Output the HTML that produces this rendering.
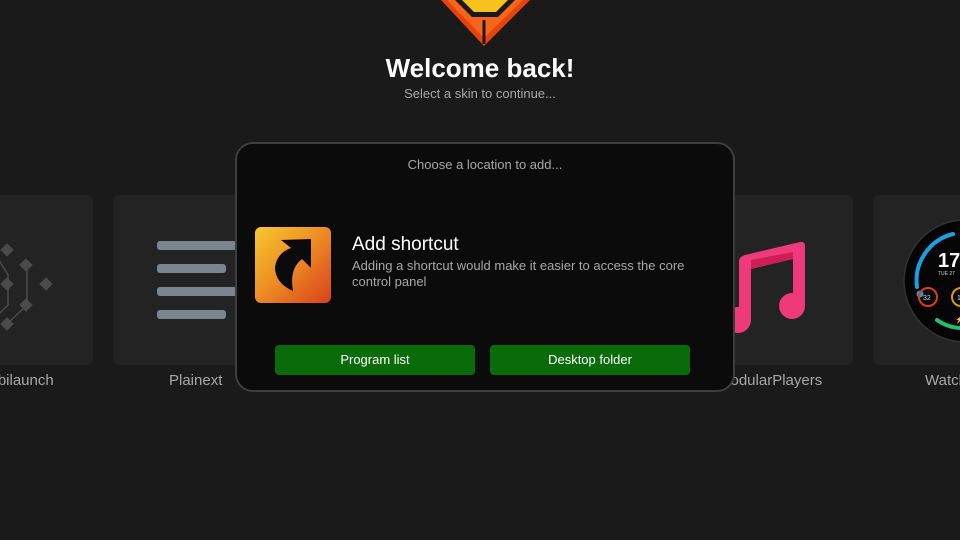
<!DOCTYPE html>
<html><head><meta charset="utf-8"><style>
*{margin:0;padding:0;box-sizing:border-box}
html,body{width:960px;height:540px;overflow:hidden}
body{background:#1a1a1a;font-family:"Liberation Sans",sans-serif;position:relative}
.card{position:absolute;top:195px;width:180px;height:170px;background:#232323;border-radius:6px;overflow:hidden}
.lbl{position:absolute;top:372px;font-size:15px;color:#a8a8a8;white-space:nowrap}
.modal{position:absolute;left:235px;top:142px;width:500px;height:250px;background:#0b0b0b;border:2px solid #3e3e3e;border-radius:18px}
.btn{position:absolute;top:201px;width:200px;height:30px;background:#0a6b0a;border-radius:4px;color:#fff;font-size:13px;text-align:center;line-height:30px}
</style></head><body>
<svg style="position:absolute;left:0;top:0" width="960" height="60">
<polygon points="441,0 530,0 484,46" fill="#e8420f"/>
<polygon points="447,0 523,0 484,38" fill="#f5661a"/>
<polygon points="455,0 515,0 498,17 472,17" fill="#1a1a1a"/>
<polygon points="462,0 508,0 496,12 474,12" fill="#f7c21d"/>
<line x1="484" y1="20" x2="484" y2="44" stroke="#1a1a1a" stroke-width="3"/>
</svg>
<div style="position:absolute;left:0;width:960px;top:53px;text-align:center;color:#fff;font-size:26px;font-weight:bold">Welcome back!</div>
<div style="position:absolute;left:0;width:960px;top:86px;text-align:center;color:#a8a8a8;font-size:13px">Select a skin to continue...</div>

<div class="card" style="left:-87px">
<svg width="180" height="170" style="position:absolute;left:0;top:0"><g fill="#4a4a4a" stroke="#4a4a4a" stroke-width="1.5">
<polyline points="80,55 95,80 95,110 80,125" fill="none"/>
<rect x="90" y="51" width="8" height="8" transform="rotate(45 94 55)"/>
<rect x="109" y="66" width="8" height="8" transform="rotate(45 113 70)"/>
<rect x="90" y="85" width="8" height="8" transform="rotate(45 94 89)"/>
<rect x="129" y="85" width="8" height="8" transform="rotate(45 133 89)"/>
<rect x="109" y="106" width="8" height="8" transform="rotate(45 113 110)"/>
<rect x="90" y="125" width="8" height="8" transform="rotate(45 94 129)"/>
<line x1="114" y1="70" x2="114" y2="110"/><line x1="114" y1="110" x2="94" y2="129"/>
</g></svg></div>
<div class="lbl" style="left:-23px">Mobilaunch</div>
<div class="card" style="left:113px">
<div style="position:absolute;left:44px;top:46px;width:80px;height:9px;background:#7b8590;border-radius:3px"></div>
<div style="position:absolute;left:44px;top:69px;width:69px;height:9px;background:#7b8590;border-radius:3px"></div>
<div style="position:absolute;left:44px;top:92px;width:80px;height:9px;background:#7b8590;border-radius:3px"></div>
<div style="position:absolute;left:44px;top:115px;width:69px;height:9px;background:#7b8590;border-radius:3px"></div>
</div>
<div class="lbl" style="left:169px">Plainext</div>
<div class="card" style="left:673px">
<svg width="180" height="170" style="position:absolute;left:0;top:0">
<path d="M72,60 L127,47 Q132,46 132,51 L132,110 A13,13 0 1 1 120,98 L120,64 L78,74 L78,125 A13,13 0 1 1 66,112 L66,66 Q66,62 72,60Z" fill="#ee3a7a"/>
<path d="M78,65 L120,57 L120,64 L78,74Z" fill="#cc1f55"/>
</svg></div>
<div class="lbl" style="left:718px">ModularPlayers</div>
<div class="card" style="left:873px">
<svg width="180" height="170" style="position:absolute;left:0;top:0">
<circle cx="92" cy="86" r="61" fill="#050505" stroke="#333" stroke-width="1.5"/>
<path d="M44,92 A48,48 0 0 1 80,39" fill="none" stroke="#1aa0e0" stroke-width="4" stroke-linecap="round"/>
<circle cx="47" cy="99" r="3.5" fill="#1aa0e0"/>
<path d="M64,125 A45,45 0 0 0 100,132" fill="none" stroke="#1fbf70" stroke-width="4" stroke-linecap="round"/>
<circle cx="55" cy="102" r="9" fill="none" stroke="#d8400e" stroke-width="2"/>
<circle cx="88" cy="102" r="9" fill="none" stroke="#d89a0e" stroke-width="2"/>
<text x="65" y="72" fill="#fff" font-size="20" font-weight="bold" font-family="Liberation Sans">17:</text>
<text x="65" y="80" fill="#ccc" font-size="5" font-family="Liberation Sans">TUE 27</text>
<text x="50" y="105" fill="#ddd" font-size="7" font-family="Liberation Sans">32</text>
<text x="84" y="105" fill="#ddd" font-size="7" font-family="Liberation Sans">19</text>
<text x="82" y="127" fill="#1fbf70" font-size="7" font-family="Liberation Sans">⚡ 10</text>
</svg></div>
<div class="lbl" style="left:925px">Watch</div>

<div class="modal">
<div style="position:absolute;left:0;width:496px;top:13px;text-align:center;color:#a8a8a8;font-size:13px">Choose a location to add...</div>
<svg style="position:absolute;left:18px;top:83px" width="76" height="76">
<defs><linearGradient id="g" x1="0" y1="0" x2="1" y2="1"><stop offset="0" stop-color="#f7c830"/><stop offset="0.5" stop-color="#ec8a24"/><stop offset="1" stop-color="#d9401c"/></linearGradient></defs>
<rect x="0" y="0" width="76" height="76" rx="6" fill="url(#g)"/>
<path d="M26,13 L56,12 L56,41 L47,32 Q34,42 38,64 Q20,56 20,40 Q22,26 36,21Z" fill="#0b0b0b"/>
</svg>
<div style="position:absolute;left:115px;top:90px;color:#fff;font-size:19px">Add shortcut</div>
<div style="position:absolute;left:115px;top:114px;width:370px;color:#a8a8a8;font-size:13px;line-height:16px">Adding a shortcut would make it easier to access the core control panel</div>
<div class="btn" style="left:38px">Program list</div>
<div class="btn" style="left:253px">Desktop folder</div>
</div>
</body></html>
